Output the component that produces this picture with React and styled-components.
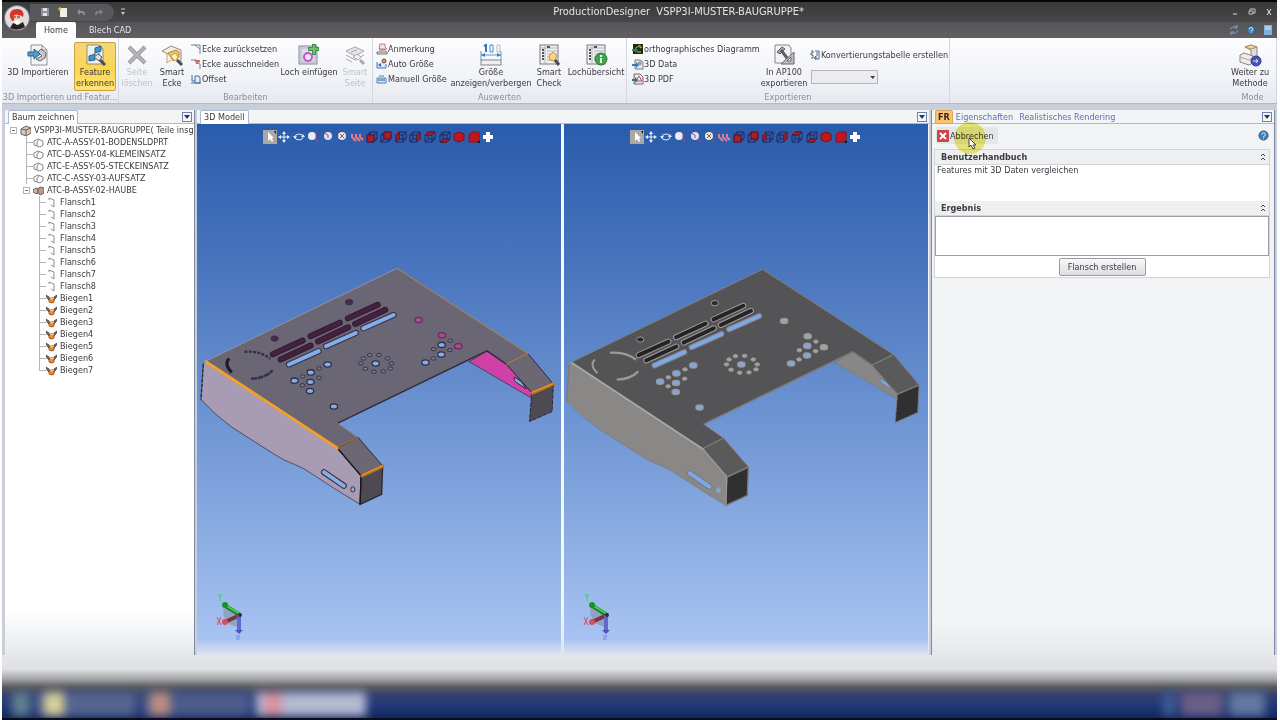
import React from 'react';
import styled, { createGlobalStyle, css } from 'styled-components';

const GlobalStyle = createGlobalStyle`
  * {
    box-sizing: border-box;
  }

  body {
    margin: 0;
    background: #fdfdfd;
    color: #3a3a3e;
    font-family: 'DejaVu Sans Condensed', 'DejaVu Sans', sans-serif;
    font-size: 9px;
    line-height: 12px;
  }

  button, select, textarea {
    margin: 0;
    padding: 0;
    border: 0;
    background: none;
    color: inherit;
    font: inherit;
  }

  svg {
    display: block;
    flex: none;
  }

  ul {
    margin: 0;
    padding: 0;
    list-style: none;
  }
`;

/* ---------- ribbon icons ---------- */

const ImportIcon = () => (
  <svg width="24" height="24" viewBox="0 0 24 24" fill="none">
    <path d="M5 2h11l5 5v15H5z" fill="#f4f5f6" stroke="#909296" />
    <path d="M16 2v5h5" stroke="#909296" />
    <path d="M12 9l3-3 5 4-1 5-5 3-4-2 6-3z" fill="#c9c9cb" stroke="#66686c" />
    <path d="M2 9h6V6l6 5-6 5v-3H2z" fill="#4d9bd0" stroke="#2d5f85" />
  </svg>
);

const FeatureIcon = () => (
  <svg width="24" height="24" viewBox="0 0 24 24" fill="none">
    <path d="M4 2h12l4 4v15H4z" fill="#eef0f0" stroke="#8f8c76" />
    <path d="M12 5l6-2v5l-6 2zM6 13l6-2v6l-6 1z" fill="#3f94d0" stroke="#2b638e" />
    <path d="M12 10l-3 3M16 9v4" stroke="#777" />
    <path d="M11 14l4-3 4 3-3 4z" fill="#dfe3e6" stroke="#5a5d62" />
    <path d="M17 17l5 5" stroke="#4a4c50" strokeWidth="3" />
  </svg>
);

const DeleteIcon = () => (
  <svg width="24" height="24" viewBox="0 0 24 24" fill="none">
    <path d="M4 4l16 16M20 4L4 20" stroke="#97999c" strokeWidth="4" />
    <path d="M4 4l16 16M20 4L4 20" stroke="#b6b7ba" strokeWidth="2" />
  </svg>
);

const CornerIcon = () => (
  <svg width="24" height="24" viewBox="0 0 24 24" fill="none">
    <path d="M2 8l9-5 10 4v12l-5-3v-5l-5-2-3 2z" fill="#f0ede6" stroke="#918b80" />
    <path d="M8 10l8-3 3 2v5l-6 4z" fill="#f1bf52" stroke="#c18d33" />
    <path d="M7 11v9l4-3" stroke="#c8a46a" />
    <path d="M11 13l4-3 3 4-3 4z" fill="#fff3c8" stroke="#cfa24a" />
    <path d="M17 17l5 5" stroke="#4a4c50" strokeWidth="3" />
  </svg>
);

const HoleIcon = () => (
  <svg width="24" height="24" viewBox="0 0 24 24" fill="none">
    <rect x="2" y="3" width="18" height="18" fill="#dcdde6" stroke="#858a9b" />
    <rect x="4" y="5" width="14" height="14" stroke="#b3b7c6" />
    <circle cx="11" cy="14" r="4" fill="#f3e5f7" stroke="#c253d0" strokeWidth="2" />
    <path d="M17 1v11M11 6h11" stroke="#3f8f46" strokeWidth="4" />
    <path d="M17 2v9M12 6h9" stroke="#6fc06b" strokeWidth="2" />
  </svg>
);

const SmartSideIcon = () => (
  <svg width="24" height="24" viewBox="0 0 24 24" fill="none" stroke="#a5a7aa">
    <path d="M3 8l9-4 9 4-9 5z" fill="#e6e7e9" />
    <path d="M3 12l9 5 9-5M3 16l6 3" />
    <path d="M8 9l6-2M10 14l4-3 4 3-3 3z" fill="#f2f2f4" />
    <path d="M17 17l4 4" strokeWidth="3" />
  </svg>
);

const DimensionIcon = () => (
  <svg width="24" height="24" viewBox="0 0 24 24" fill="none">
    <path d="M5 3l2-1v7" stroke="#2f74c4" strokeWidth="2" />
    <path d="M11 2h3v7h-3z" stroke="#4b84c8" />
    <path d="M18 2h3v7h-3z" stroke="#a9bbd2" />
    <path d="M2 8v9M22 8v9M2 12h20" stroke="#6d93bf" />
    <path d="M2 12l4-2v4zM22 12l-4-2v4z" fill="#3f7fc8" />
    <rect x="2" y="17" width="20" height="5" fill="#eff0f3" stroke="#84868b" />
  </svg>
);

const ListSheet = () => (
  <>
    <rect x="3" y="2" width="18" height="19" fill="#f1f1f2" stroke="#77797d" />
    <path d="M8 2v19M3 5h18M10 8h10M10 11h10M10 14h10M10 17h10" stroke="#b0b1b5" />
    <path d="M5 7h2M5 10h2M5 13h2M5 16h2M10 4h3" stroke="#4e5054" strokeWidth="2" />
  </>
);

const CheckIcon = () => (
  <svg width="24" height="24" viewBox="0 0 24 24" fill="none">
    <ListSheet />
    <path d="M12 13l4-4 4 4-3 5-4-1z" fill="#f7d879" stroke="#c39a3e" />
    <path d="M18 17l4 5" stroke="#4a4c50" strokeWidth="3" />
  </svg>
);

const HoleListIcon = () => (
  <svg width="24" height="24" viewBox="0 0 24 24" fill="none">
    <ListSheet />
    <circle cx="17" cy="16" r="6" fill="#3fa548" stroke="#26752e" />
    <path d="M17 12v2M17 15v5" stroke="#f4fff4" strokeWidth="2" />
  </svg>
);

const ExportIcon = () => (
  <svg width="24" height="24" viewBox="0 0 24 24" fill="none">
    <path d="M3 2h14l2 3v15H3z" fill="#f3f3f4" stroke="#85878b" />
    <path d="M5 9l5-5 3 2-5 5z" fill="#a9aaad" stroke="#56585c" />
    <path d="M9 7l9 12" stroke="#5f6165" strokeWidth="3" />
    <path d="M9 21L22 9v12z" fill="#bcbec2" stroke="#66686c" />
    <path d="M15 18l4-4v4z" fill="#f3f3f4" stroke="#66686c" />
  </svg>
);

const MethodIcon = () => (
  <svg width="24" height="24" viewBox="0 0 24 24" fill="none">
    <path d="M7 4l6-2 6 2v10l-6 3V7z" fill="#dcdcde" stroke="#85878b" />
    <path d="M7 4l6 2 6-2-6-2z" fill="#f7d5ab" stroke="#b08d62" />
    <path d="M2 12l4-2 9 3v7l-4 2-9-3z" fill="#ececee" stroke="#85878b" />
    <path d="M2 14l9 3 4-2" stroke="#d3a368" />
    <circle cx="18" cy="18" r="5" fill="#4755b9" stroke="#303b8d" />
    <path d="M15 18h5M18 16l2 2-2 2" stroke="#e3e6fb" />
  </svg>
);

const smallIcons = {
  reset: <path d="M1 2h4l5 4v5M5 2h5v4" stroke="#6c8296" fill="none" />,
  cut: (
    <>
      <path d="M1 2h4l5 4v5" stroke="#6c8296" fill="none" />
      <path d="M5 2l2 4 3-3z" fill="#dc8377" stroke="#b05d57" />
    </>
  ),
  offset: <path d="M2 2v6h3M5 3h4l1 2v5H5zM1 10h10" stroke="#4d6ea1" fill="#e3ebf6" />,
  note: (
    <>
      <path d="M4 1h5v3l2 2H3z" fill="#f9e2e6" stroke="#bd7d87" />
      <path d="M3 7h7M1 9h10v2H1z" fill="#eee" stroke="#707277" />
    </>
  ),
  auto: (
    <>
      <path d="M1 4v6h9V6" fill="#dbeafa" stroke="#4177b5" />
      <circle cx="8" cy="3" r="2" fill="#d9a273" stroke="#6c4a35" />
      <path d="M2 7l3-2v4z" fill="#2868b0" />
    </>
  ),
  manual: (
    <>
      <path d="M1 5v5h9V5zM3 3h5" fill="#cfe3f7" stroke="#4b83bd" />
      <path d="M2 7h7" stroke="#285f9d" />
    </>
  ),
  ortho: (
    <>
      <rect x="1" y="1" width="10" height="10" fill="#1b2c12" />
      <path d="M4 5l4-3v3l2-1M5 9h4" stroke="#a2d345" fill="none" />
      <path d="M0 6h3V4l3 3-3 3V8H0z" fill="#35845d" />
    </>
  ),
  data: (
    <>
      <path d="M3 2h5l3 2v7H3z" fill="#e6e7e9" stroke="#7b7d82" />
      <path d="M5 5l3-2 2 2-2 3z" fill="#9a9ca0" />
      <path d="M0 6h4V4l3 3-3 3V8H0z" fill="#327cb7" />
    </>
  ),
  pdf: (
    <>
      <path d="M2 1h6l3 3v7H2z" fill="#f0e8e8" stroke="#6b6d72" />
      <path d="M4 8l3-5 3 5z" fill="none" stroke="#c8484a" />
      <path d="M0 6h3V4l3 3-3 3V8H0z" fill="#3b6f8f" />
    </>
  ),
  convert: (
    <>
      <path d="M2 2h2v2H2v2h2v3H2M6 2h4v8H6" stroke="#5b6572" fill="none" />
      <path d="M8 3v4M5 9l2-2v3z" fill="#9bbfe2" stroke="#476f9f" />
    </>
  ),
};

const SmallIcon = ({ name }) => (
  <svg width="12" height="12" viewBox="0 0 12 12">{smallIcons[name]}</svg>
);

/* ---------- tree icons ---------- */

const treeIcons = {
  root: (
    <>
      <path d="M1 4l5-3 5 2v5l-5 3-5-2z" fill="#d8c7b8" stroke="#6f625b" />
      <path d="M1 4l5 1 5-2M6 5v6" stroke="#6f625b" fill="none" />
    </>
  ),
  part: (
    <>
      <path d="M1 4l4-2 5 2v4L7 10 4 9 1 8z" fill="#fbfbfc" stroke="#85878c" />
      <path d="M4 9V5l2-2" fill="none" stroke="#85878c" />
    </>
  ),
  sheet: (
    <>
      <path d="M0 5l3-2 2 1v4L4 9 0 7z" fill="#cdb5a5" stroke="#6e5a50" />
      <path d="M5 7V4l2-2 4 1v5l-4 2z" fill="#b79b8c" stroke="#6e5a50" />
    </>
  ),
  flange: (
    <>
      <path d="M3 1l5 2v7L3 7z" fill="#fcfcfc" />
      <path d="M3 3V1l5 2v7l-3-2" fill="none" stroke="#8d8f94" />
    </>
  ),
  bend: (
    <>
      <path d="M3 5h5v4l-2 1-3-1z" fill="#f28a2c" stroke="#a4541c" />
      <path d="M0 2l3 2v3L1 5zM11 2L8 4v3l2-2z" fill="#7d6257" stroke="#665650" />
      <path d="M4 5l2 1 2-1" stroke="#ffe0a0" fill="none" />
    </>
  ),
};

const TreeIcon = ({ name }) => (
  <svg width="11" height="11" viewBox="0 0 11 11">{treeIcons[name]}</svg>
);

/* ---------- view toolbar icons ---------- */

const cube = (face) => (
  <>
    <path d="M2 5h7v7H2zM5 2h7v7M2 5l3-3M9 5l3-3M9 12l3-3M5 2v7h7M5 9l-3 3" fill="none" stroke="#23265c" />
    <path d={face} fill="#a81f2b" stroke="#5e1526" />
  </>
);

const viewTools = [
  ['Auswählen', <><path d="M5 2v9l2-2 2 3 1-1-1-3h2z" fill="#fff" /><path d="M11 1h2v3z" fill="#111" /></>],
  ['Verschieben', <><path d="M7 3v8M3 7h8" stroke="#e8f0fb" /><path d="M7 1l2 3H5zM7 13l2-3H5zM1 7l3-2v4zM13 7l-3-2v4z" fill="#e8f0fb" /></>],
  ['Drehen', <><ellipse cx="7" cy="7" rx="4" ry="3" stroke="#dbe7f6" fill="none" /><path d="M1 6h4l-2 3zM13 7H9l2-3z" fill="#dbe7f6" /></>],
  ['Zoom', <><circle cx="6" cy="6" r="4" fill="#e9edf5" /><path d="M10 3v6l2 3" stroke="#c0485f" fill="none" /></>],
  ['Zoom Bereich', <><circle cx="7" cy="6" r="4" fill="#dde3ee" /><path d="M3 3l4 2v3M9 9l3 3" stroke="#b94863" fill="none" /></>],
  ['Einpassen', <><circle cx="7" cy="6" r="4" fill="#e9e3dc" /><path d="M5 4l4 4M9 4L5 8M9 9l3 3" stroke="#8b5d56" /></>],
  ['Schnitt', <path d="M2 4v3l4 4M6 4v3l4 4M10 4v3l3 3" fill="none" stroke="#e57a8c" strokeWidth="2" />],
  ['Vorne', cube('M2 5h7v7H2z')],
  ['Hinten', cube('M5 2h7v7H5z')],
  ['Links', cube('M2 5l3-3v7l-3 3z')],
  ['Rechts', cube('M9 5l3-3v7l-3 3z')],
  ['Oben', cube('M2 5l3-3h7L9 5z')],
  ['Unten', cube('M2 12l3-3h7l-3 3z')],
  ['Isometrisch', <path d="M7 2l5 2v6l-5 2-5-2V4z" fill="#c0161f" stroke="#7b1019" />],
  ['Schattiert', <><path d="M2 5l3-3h7v8l-2 2H2z" fill="#c0161f" stroke="#8c1019" /><path d="M10 13h3v-3z" fill="#111" /></>],
  ['Hinzufügen', <path d="M7 2v10M2 7h10" stroke="#fff" strokeWidth="4" />],
];

/* ---------- 3D model ---------- */

const palettes = {
  feature: {
    top: '#6b6673', edge: '#2c2936', side: '#a89bb4', inner: '#cf41a6', end: '#4d4a52', flap: '#6d6774',
    fold: '#f1a02c', foldDark: '#b8741f', slot: '#46213f', slotRim: '#2e1c35', open: '#86aee6', hole: '#302e4b', rim: '#97919e',
  },
  solid: {
    top: '#545355', edge: '#7a7876', side: '#8a8887', inner: '#888686', end: '#302f31', flap: '#5b5a5b',
    fold: '#aaa8a5', foldDark: '#7d7b79', slot: '#242326', slotRim: '#a09e9b', open: '#7fa7e3', hole: '#9b9a9a', rim: '#807f7d',
  },
};

const darkSlots = [
  [460, 187, 550, 146], [482, 204, 573, 161],
  [347, 241, 436, 200], [370, 257, 461, 214],
  [234, 295, 324, 254], [257, 311, 348, 269],
];
const openSlots = [[507, 217, 598, 177], [394, 271, 484, 231], [282, 326, 372, 286]];
const bigHoles = [
  [399, 326], [348, 350], [299, 375], [347, 379], [346, 406], [418, 453],
  [544, 323], [743, 267], [742, 296], [694, 320],
];
const smallHoles = [
  [374, 338], [324, 362], [373, 366], [323, 389], [769, 254], [719, 280], [768, 283], [718, 308],
  [526, 298], [554, 297], [580, 308], [592, 323], [588, 338], [567, 347], [539, 348], [513, 339], [499, 323], [507, 308],
];
const markedHoles = [[673, 192], [744, 238], [793, 271]];

const Slot = ({ line, rim, fill }) => (
  <g strokeLinecap="round">
    <path d={`M${line[0]} ${line[1]}L${line[2]} ${line[3]}`} stroke={rim} strokeWidth="18" />
    <path d={`M${line[0]} ${line[1]}L${line[2]} ${line[3]}`} stroke={fill} strokeWidth="12" />
  </g>
);

const Model = ({ variant }) => {
  const c = palettes[variant];
  const marked = variant === 'feature';
  return (
    <ModelSvg viewBox={marked ? '5 23 1098 760' : '9 20 1098 760'} fill="none">
      <path d="M825 318L880 285 938 325 1015 412 1012 426Q915 370 875 346 850 330 825 318z" fill={c.inner} stroke={c.edge} strokeWidth="2" />
      <path d="M962 364q-4 10 8 17l28 19-14-22z" fill={c.open} stroke={c.edge} strokeWidth="3" />
      <path d="M1015 412L1080 385 1076 468 1008 498z" fill={c.end} stroke={c.edge} strokeWidth="3" strokeDasharray="14 3" />
      <path d="M938 325L1003 293 1080 385 1015 412z" fill={c.flap} stroke={c.edge} strokeWidth="3" />
      <path d="M32 316L608 36 1003 293 938 325 880 285 430 503 490 545 428 578z" fill={c.top} stroke={c.rim} strokeWidth="3" />
      <path d="M430 503L880 285 938 325" stroke={c.edge} strokeWidth="4" />
      <path d="M608 36L1003 293" stroke={c.foldDark} strokeWidth="2" />
      <path d="M32 316L428 578 500 662 497 748 430 707 350 655Q330 640 300 628 270 618 235 595L110 515 60 475 17 432 24 325z" fill={c.side} stroke={c.edge} strokeWidth="2" />
      <path d="M24 325L17 432" stroke={c.edge} strokeWidth="4" strokeDasharray="10 5" />
      <path d="M500 662L565 632 562 718 497 748z" fill={c.end} stroke={c.edge} strokeWidth="4" />
      <path d="M428 578L490 545 565 632 500 662z" fill={c.flap} stroke={c.edge} strokeWidth="3" />
      <path d="M428 578L500 662 497 748" stroke={marked ? '#18171d' : '#9c9a98'} strokeWidth="4" />
      <path d="M32 318L428 578" stroke={c.fold} strokeWidth={marked ? 9 : 5} strokeLinecap="round" />
      <path d="M428 576L490 545M938 325L1003 293" stroke={c.foldDark} strokeWidth="3" />
      <path d="M503 662L565 633M1017 412L1080 385" stroke={c.foldDark} strokeWidth={marked ? 10 : 4} strokeLinecap="round" />
      {marked && <path d="M503 660L565 631M1017 410L1080 383" stroke={c.fold} strokeWidth="3" />}
      {darkSlots.map((line) => <Slot key={line.join()} line={line} rim={c.slotRim} fill={c.slot} />)}
      {openSlots.map((line) => <Slot key={line.join()} line={line} rim={marked ? c.hole : c.rim} fill={c.open} />)}
      <Slot line={[388, 651, 448, 692]} rim={c.edge} fill={c.open} />
      <ellipse cx="475" cy="703" rx="6" ry="8" fill={c.open} stroke={c.hole} strokeWidth="3" />
      <path d="M102 308Q85 325 110 350" stroke={marked ? '#1e1b26' : c.hole} strokeWidth={marked ? 9 : 6} />
      <path d="M148 288Q195 284 226 309" stroke={c.hole} strokeWidth="7" strokeDasharray={marked ? '9 4' : '0'} />
      <path d="M168 369Q210 368 233 344" stroke={c.hole} strokeWidth="7" strokeDasharray={marked ? '18 2' : '0'} />
      {[[464, 138], [239, 248]].map(([x, y]) => (
        <ellipse key={x} cx={x} cy={y} rx="11" ry="8" fill={marked ? '#512744' : '#2b2a2c'} stroke={c.hole} strokeWidth="3" />
      ))}
      {bigHoles.map(([x, y]) => (
        <ellipse key={`${x}-${y}`} cx={x} cy={y} rx="11" ry="8" fill={c.open} stroke={c.hole} strokeWidth="4" />
      ))}
      {smallHoles.map(([x, y]) => (
        <ellipse key={`${x}-${y}`} cx={x} cy={y} rx="7" ry="5" fill={marked ? '#7d7a93' : '#a3a2a2'} stroke={c.hole} strokeWidth="3" />
      ))}
      {markedHoles.map(([x, y]) => (
        <ellipse key={x} cx={x} cy={y} rx="11" ry="8" fill={marked ? '#b14a96' : '#a3a2a2'} stroke={marked ? '#6d2a5c' : c.hole} strokeWidth="4" />
      ))}
    </ModelSvg>
  );
};

const Triad = () => (
  <svg width="34" height="50" viewBox="0 0 34 50" fill="none">
    <path d="M8 14q8 2 16 9l-3 12-10-4-4-9z" fill="#8a97ae" opacity=".7" />
    <path d="M24 23L8 13" stroke="#1f7d2a" strokeWidth="4" />
    <path d="M24 22L9 13" stroke="#41d548" strokeWidth="2" />
    <circle cx="9" cy="13" r="3" fill="#1f8f2b" />
    <path d="M24 23L9 30" stroke="#76363f" strokeWidth="4" />
    <circle cx="9" cy="30" r="3" fill="#dc4a5e" />
    <path d="M23 23v16" stroke="#6268cf" strokeWidth="4" />
    <path d="M19 38h8l-4 4z" fill="#4b52c8" />
    <circle cx="24" cy="23" r="2" fill="#2b3145" />
    <path d="M2 2l2 3 2-3M4 5v4" stroke="#3bcf5c" />
    <path d="M1 25l4 8M5 25l-4 8" stroke="#d84a63" />
    <path d="M20 44h4l-4 3h4" stroke="#7f8be0" />
  </svg>
);

/* ---------- parts ---------- */

const BigButton = ({ icon: Icon, lines, width, active, disabled }) => (
  <LargeButton $width={width} $active={active} disabled={disabled}>
    <Icon />
    {lines.map((line) => <span key={line}>{line}</span>)}
  </LargeButton>
);

const CommandList = ({ items, width, inset }) => (
  <Commands $width={width} $inset={inset}>
    {items.map(([icon, label]) => (
      <SmallButton key={label}>
        <SmallIcon name={icon} />
        {label}
      </SmallButton>
    ))}
  </Commands>
);

const MenuButton = ({ label }) => (
  <DropButton aria-label={label}>
    <svg width="6" height="4" viewBox="0 0 6 4"><path d="M0 0h6L3 4z" fill="#35363d" /></svg>
  </DropButton>
);

const Collapse = () => (
  <svg width="6" height="8" viewBox="0 0 6 8" fill="none" stroke="#44454a">
    <path d="M1 3l2-2 2 2M1 7l2-2 2 2" />
  </svg>
);

const HelpIcon = ({ size }) => (
  <svg width={size} height={size} viewBox="0 0 12 12" fill="none">
    <circle cx="6" cy="6" r="5" fill="#3f7fb5" stroke="#2a5679" />
    <path d="M4 5q0-2 2-2t2 2-2 2v1M6 9v1" stroke="#e8f2fb" />
  </svg>
);

const tree = [
  { depth: 0, icon: 'root', label: 'VSPP3I-MUSTER-BAUGRUPPE( Teile insg', open: true },
  { depth: 1, icon: 'part', label: 'ATC-A-ASSY-01-BODENSLDPRT' },
  { depth: 1, icon: 'part', label: 'ATC-D-ASSY-04-KLEMEINSATZ' },
  { depth: 1, icon: 'part', label: 'ATC-E-ASSY-05-STECKEINSATZ' },
  { depth: 1, icon: 'part', label: 'ATC-C-ASSY-03-AUFSATZ' },
  { depth: 1, icon: 'sheet', label: 'ATC-B-ASSY-02-HAUBE', open: true },
  ...[1, 2, 3, 4, 5, 6, 7, 8].map((n) => ({ depth: 2, icon: 'flange', label: `Flansch${n}` })),
  ...[1, 2, 3, 4, 5, 6, 7].map((n) => ({ depth: 2, icon: 'bend', label: `Biegen${n}`, last: n === 7 })),
];

const View = ({ variant }) => (
  <Viewport>
    <ViewTools>
      {viewTools.map(([label, drawing], i) => (
        <ViewTool key={label} aria-label={label} $active={i === 0}>
          <svg width="14" height="14" viewBox="0 0 14 14">{drawing}</svg>
        </ViewTool>
      ))}
    </ViewTools>
    <Model variant={variant} />
    <TriadCorner><Triad /></TriadCorner>
  </Viewport>
);

const App = () => (
  <Window>
    <GlobalStyle />
    <TitleBar>
      <QuickAccess>
        <IconButton aria-label="Speichern">
          <svg width="10" height="10" viewBox="0 0 10 10"><path d="M1 1h8v8H1z" fill="#8c93a0" /><path d="M3 1h4v3H3zM3 6h4v3H3z" fill="#dfe2e8" /></svg>
        </IconButton>
        <IconButton aria-label="Neu">
          <svg width="10" height="10" viewBox="0 0 10 10"><path d="M2 1h7v9H2z" fill="#f1efe4" /><path d="M0 2h4M2 0v4" stroke="#f2cf4c" /></svg>
        </IconButton>
        <IconButton aria-label="Rückgängig">
          <svg width="10" height="10" viewBox="0 0 10 10" fill="none"><path d="M3 5h3q2 0 2 3" stroke="#8e8f94" strokeWidth="2" /><path d="M4 2L1 5l3 3z" fill="#8e8f94" /></svg>
        </IconButton>
        <IconButton aria-label="Wiederholen">
          <svg width="10" height="10" viewBox="0 0 10 10" fill="none"><path d="M7 5H4Q2 5 2 8" stroke="#7f8085" strokeWidth="2" /><path d="M6 2l3 3-3 3z" fill="#7f8085" /></svg>
        </IconButton>
      </QuickAccess>
      <IconButton aria-label="Schnellzugriff anpassen">
        <svg width="6" height="8" viewBox="0 0 6 8"><path d="M1 1h4" stroke="#c9c9cc" /><path d="M1 4h4L3 7z" fill="#c9c9cc" /></svg>
      </IconButton>
      <Title>ProductionDesigner&nbsp; VSPP3I-MUSTER-BAUGRUPPE*</Title>
      <WindowButtons>
        <IconButton aria-label="Minimieren"><svg width="8" height="8" viewBox="0 0 8 8"><path d="M2 6h4" stroke="#d5d5d8" strokeWidth="1" /></svg></IconButton>
        <IconButton aria-label="Wiederherstellen"><svg width="8" height="8" viewBox="0 0 8 8" fill="none" stroke="#c5c5c8"><path d="M1 3h4v3H1zM2 3V1h5v4H5" /></svg></IconButton>
        <IconButton aria-label="Schließen"><svg width="8" height="8" viewBox="0 0 8 8"><path d="M2 1l4 6M6 1L2 7" stroke="#e8e8ea" strokeWidth="1" /></svg></IconButton>
      </WindowButtons>
      <Orb aria-label="Anwendungsmenü">
        <svg width="28" height="28" viewBox="0 0 28 28">
          <circle cx="14" cy="14" r="13" fill="#77787c" />
          <circle cx="14" cy="14" r="12" fill="#dddddf" />
          <path d="M7 13q-1-8 7-8t6 8l-3-2-1 4-7 2z" fill="#d9322b" />
          <path d="M10 12q4-3 7 0l-1 5-4 1z" fill="#f0c6b0" />
          <path d="M10 13h3M14 13h3" stroke="#5b2520" />
          <path d="M7 24l3-5 5 2 5-3 2 5q-8 5-15 1z" fill="#27201f" />
          <path d="M11 18l3 3 3-3-1-2h-4z" fill="#fff" />
        </svg>
      </Orb>
    </TitleBar>

    <RibbonTabs>
      <RibbonTab $active>Home</RibbonTab>
      <RibbonTab>Blech CAD</RibbonTab>
      <RibbonTools>
        <IconButton aria-label="Aktualisieren"><svg width="10" height="10" viewBox="0 0 10 10" fill="none" stroke="#72a5d8"><path d="M1 4q4-4 7-2M8 0v3H5M9 6q-4 4-7 2M2 10V7h3" /></svg></IconButton>
        <IconButton aria-label="Hilfe"><HelpIcon size={10} /></IconButton>
        <IconButton aria-label="Info"><svg width="10" height="10" viewBox="0 0 10 10"><path d="M1 0h8v10H1z" fill="#7eb2e0" /><path d="M2 2h6M2 4h6" stroke="#d5e8f8" /></svg></IconButton>
      </RibbonTools>
    </RibbonTabs>

    <Ribbon>
      <Group $width={117}>
        <GroupBody>
          <BigButton icon={ImportIcon} lines={['3D Importieren']} width={72} />
          <BigButton icon={FeatureIcon} lines={['Feature', 'erkennen']} width={42} active />
        </GroupBody>
        <Caption>3D Importieren und Featur...</Caption>
      </Group>
      <Group $width={254}>
        <GroupBody>
          <BigButton icon={DeleteIcon} lines={['Seite', 'löschen']} width={36} disabled />
          <BigButton icon={CornerIcon} lines={['Smart', 'Ecke']} width={34} />
          <CommandList width={91} inset={1} items={[['reset', 'Ecke zurücksetzen'], ['cut', 'Ecke ausschneiden'], ['offset', 'Offset']]} />
          <BigButton icon={HoleIcon} lines={['Loch einfügen']} width={58} />
          <BigButton icon={SmartSideIcon} lines={['Smart', 'Seite']} width={34} disabled />
        </GroupBody>
        <Caption>Bearbeiten</Caption>
      </Group>
      <Group $width={254}>
        <GroupBody>
          <CommandList width={78} inset={3} items={[['note', 'Anmerkung'], ['auto', 'Auto Größe'], ['manual', 'Manuell Größe']]} />
          <BigButton icon={DimensionIcon} lines={['Größe', 'anzeigen/verbergen']} width={80} />
          <BigButton icon={CheckIcon} lines={['Smart', 'Check']} width={36} />
          <BigButton icon={HoleListIcon} lines={['Lochübersicht']} width={58} />
        </GroupBody>
        <Caption>Auswerten</Caption>
      </Group>
      <Group $width={323}>
        <GroupBody>
          <CommandList width={132} inset={5} items={[['ortho', 'orthographisches Diagramm'], ['data', '3D Data'], ['pdf', '3D PDF']]} />
          <BigButton icon={ExportIcon} lines={['In AP100', 'exportieren']} width={50} />
          <ConvertBox>
            <SmallButton><SmallIcon name="convert" />Konvertierungstabelle erstellen</SmallButton>
            <SelectWrap>
              <select aria-label="Konvertierungstabelle" />
              <svg width="5" height="3" viewBox="0 0 5 3"><path d="M0 0h5L3 3z" fill="#3e3f44" /></svg>
            </SelectWrap>
          </ConvertBox>
        </GroupBody>
        <Caption>Exportieren</Caption>
      </Group>
      <Spacer />
      <Group $width={48}>
        <GroupBody>
          <BigButton icon={MethodIcon} lines={['Weiter zu', 'Methode']} width={42} />
        </GroupBody>
        <Caption>Mode</Caption>
      </Group>
    </Ribbon>

    <Workspace>
      <TreePanel>
        <PanelTabs>
          <PanelTab $active>Baum zeichnen</PanelTab>
          <MenuButton label="Baum Menü" />
        </PanelTabs>
        <Tree>
          {tree.map((node) => (
            <TreeRow key={node.label} $depth={node.depth}>
              <Lead $box={node.open} $last={node.last} />
              <TreeIcon name={node.icon} />
              <span>{node.label}</span>
            </TreeRow>
          ))}
        </Tree>
      </TreePanel>

      <ModelPanel>
        <PanelTabs>
          <PanelTab $active>3D Modell</PanelTab>
          <MenuButton label="Modell Menü" />
        </PanelTabs>
        <Views>
          <View variant="feature" />
          <View variant="solid" />
        </Views>
      </ModelPanel>

      <SidePanel>
        <PanelTabs>
          <SideTab $active>FR</SideTab>
          <SideTab>Eigenschaften</SideTab>
          <SideTab>Realistisches Rendering</SideTab>
          <MenuButton label="Eigenschaften Menü" />
        </PanelTabs>
        <Actions>
          <CancelButton>
            <svg width="12" height="12" viewBox="0 0 12 12">
              <rect width="12" height="12" rx="1" fill="#cf4347" />
              <path d="M3 3l6 6M9 3L3 9" stroke="#fff" strokeWidth="2" />
            </svg>
            Abbrechen
            <Halo />
            <Pointer width="9" height="13" viewBox="0 0 9 13">
              <path d="M1 1v9l2-2 2 4 2-1-2-3h3z" fill="#fff" stroke="#45443a" />
            </Pointer>
          </CancelButton>
          <IconButton aria-label="Hilfe"><HelpIcon size={11} /></IconButton>
        </Actions>
        <Section>
          <SectionHead><h2>Benutzerhandbuch</h2><Collapse /></SectionHead>
          <Hint>Features mit 3D Daten vergleichen</Hint>
          <SectionHead><h2 id="result">Ergebnis</h2><Collapse /></SectionHead>
          <Result aria-labelledby="result" />
          <ButtonRow><CreateButton>Flansch erstellen</CreateButton></ButtonRow>
        </Section>
      </SidePanel>
    </Workspace>

    <Footer>
      <Taskbar>
        <TaskIcon $width={18} $color="#5f8090" />
        <TaskButton $width={100} $color="#56658f"><TaskIcon $width={20} $color="#d8cf9a" /></TaskButton>
        <TaskButton $width={108} $color="#4c5c8b"><TaskIcon $width={20} $color="#bb8e81" /></TaskButton>
        <TaskButton $width={110} $color="#b4bad2"><TaskIcon $width={18} $color="#d793a0" /></TaskButton>
        <Spacer />
        <TaskIcon $width={12} $color="#405d95" />
        <TaskIcon $width={42} $color="#6a5f88" />
        <TaskIcon $width={36} $color="#6478a0" />
      </Taskbar>
    </Footer>
  </Window>
);

export default App;

const Window = styled.div`
  display: flex;
  flex-direction: column;
  min-height: 100vh;
  margin: 0 3px 0 2px;
  background: #c9ced9;
`;

const TitleBar = styled.header`
  position: relative;
  display: flex;
  align-items: center;
  height: 22px;
  padding-left: 28px;
  border-top: 2px solid #050505;
  background: linear-gradient(#39393b, #474649);
`;

const QuickAccess = styled.div`
  display: flex;
  align-items: center;
  gap: 8px;
  height: 17px;
  padding: 0 10px;
  margin-right: 6px;
  border-radius: 0 9px 9px 0;
  background: #58575a;
`;

const IconButton = styled.button`
  display: grid;
  place-items: center;
`;

const Title = styled.h1`
  flex: 1;
  margin: 0;
  color: #e4e4e6;
  font-size: 11px;
  font-weight: 400;
  line-height: 14px;
  text-align: center;
`;

const WindowButtons = styled.div`
  display: flex;
  gap: 9px;
  padding-right: 4px;
`;

const Orb = styled.button`
  position: absolute;
  top: 2px;
  left: 1px;
  z-index: 1;
`;

const RibbonTabs = styled.nav`
  display: flex;
  gap: 3px;
  height: 16px;
  padding-left: 34px;
  background: linear-gradient(#555457, #615f62);
`;

const RibbonTab = styled.button`
  height: 16px;
  padding: 0 ${(props) => (props.$active ? 8 : 10)}px;
  border-radius: 2px 2px 0 0;
  background: ${(props) => (props.$active ? '#fdfdfd' : 'none')};
  color: ${(props) => (props.$active ? '#3a3a3e' : '#e4e4e6')};
`;

const RibbonTools = styled.div`
  display: flex;
  align-items: center;
  gap: 7px;
  margin-left: auto;
  padding-right: 4px;
`;

const Ribbon = styled.div`
  display: flex;
  height: 66px;
  border-bottom: 1px solid #b5bac5;
  background: linear-gradient(#fdfdfe, #f1f3f8 60%, #e6e9f0);
`;

const Group = styled.section`
  display: flex;
  flex: none;
  flex-direction: column;
  width: ${(props) => props.$width}px;
  padding-top: 4px;
  border-right: 1px solid #d4d7df;
`;

const GroupBody = styled.div`
  display: flex;
  height: 49px;
`;

const Caption = styled.div`
  color: #8a8e98;
  text-align: center;
  white-space: nowrap;
`;

const Spacer = styled.div`
  flex: 1;
`;

const LargeButton = styled.button`
  display: flex;
  flex: none;
  flex-direction: column;
  align-items: center;
  width: ${(props) => props.$width}px;
  height: 49px;
  border: 1px solid transparent;
  border-radius: 2px;
  line-height: 11px;
  white-space: nowrap;

  &:disabled {
    color: #c0c2c7;
  }

  ${(props) => props.$active && css`
    border-color: #c9a340;
    background: linear-gradient(#f6d57b, #fbd550 55%, #fde476);
  `}
`;

const Commands = styled.div`
  display: flex;
  flex: none;
  flex-direction: column;
  gap: 3px;
  width: ${(props) => props.$width}px;
  padding: 1px 0 0 ${(props) => props.$inset}px;
`;

const SmallButton = styled.button`
  display: flex;
  align-items: center;
  white-space: nowrap;
`;

const ConvertBox = styled.div`
  display: flex;
  flex-direction: column;
  gap: 9px;
  padding-top: 7px;
`;

const SelectWrap = styled.div`
  position: relative;
  width: 67px;
  margin-left: 2px;

  select {
    display: block;
    width: 100%;
    height: 14px;
    border: 1px solid #b4b6bb;
    background: #ececee;
    appearance: none;
  }

  svg {
    position: absolute;
    top: 6px;
    right: 3px;
    pointer-events: none;
  }
`;

const Workspace = styled.main`
  display: flex;
  flex: 1;
  gap: 2px;
  padding: 6px 2px 0 3px;
`;

const TreePanel = styled.aside`
  display: flex;
  flex: none;
  flex-direction: column;
  width: 190px;
  border-right: 1px solid #7d8aa3;
  background: linear-gradient(#fff 92%, #e6e8ec);
`;

const ModelPanel = styled.section`
  display: flex;
  flex: 1;
  flex-direction: column;
  min-width: 0;
`;

const SidePanel = styled.aside`
  display: flex;
  flex: none;
  flex-direction: column;
  width: 344px;
  border: solid #7d8aa3;
  border-width: 0 1px;
  background: linear-gradient(#f2f3f5 94%, #e6e8ec);
`;

const PanelTabs = styled.div`
  display: flex;
  align-items: center;
  flex: none;
  height: 14px;
  padding: 0 2px 0 3px;
  border-bottom: 1px solid #a9bad5;
  background: #f2f4f6;

  > :last-child {
    margin-left: auto;
  }
`;

const PanelTab = styled.button`
  height: 14px;
  padding: 0 3px;
  border: 1px solid #a9bad5;
  border-bottom: 0;
  border-radius: 2px 2px 0 0;
  background: #fff;
`;

const SideTab = styled.button`
  height: 14px;
  padding: 0 3px;
  color: #5c73ad;

  ${(props) => props.$active && css`
    padding: 0 2px;
    border: 1px solid #dda758;
    border-radius: 2px 2px 0 0;
    background: #fbc26b;
    color: #33291c;
    font-weight: 700;
  `}
`;

const DropButton = styled.button`
  display: grid;
  place-items: center;
  width: 10px;
  height: 10px;
  border: 1px solid #6d83ad;
  background: #f4f7fb;
`;

const Tree = styled.ul`
  overflow: hidden;
`;

const TreeRow = styled.li`
  display: flex;
  align-items: center;
  height: 12px;
  padding-left: ${(props) => 5 + props.$depth * 13}px;
  white-space: nowrap;

  span + svg {
    margin-right: 3px;
  }
`;

const Lead = styled.span`
  flex: none;
  width: 10px;
  height: 12px;
  background:
    linear-gradient(#b4b5b8, #b4b5b8) 3px 0 / 1px ${(props) => (props.$last ? '6px' : '12px')} no-repeat,
    linear-gradient(#b4b5b8, #b4b5b8) 3px 6px / 7px 1px no-repeat;

  ${(props) => props.$box && css`
    width: 7px;
    height: 7px;
    margin-right: 3px;
    border: 1px solid #b4b5b8;
    background: linear-gradient(#6d6e72, #6d6e72) center / 3px 1px no-repeat #fff;
  `}
`;

const Views = styled.div`
  display: flex;
  flex: 1;
  gap: 3px;
  padding-right: 1px;
  background: linear-gradient(#f4f7fb 90%, #e0e4ee);
`;

const Viewport = styled.div`
  display: grid;
  flex: 1;
  grid-template-rows: 1fr auto 1fr;
  min-width: 0;
  background: linear-gradient(#2a5cac, #4874bd 26%, #86a9e0 74%, #a8c3f2 97%, #e0e4ee);
`;

const ViewTools = styled.div`
  display: flex;
  align-items: start;
  justify-content: space-between;
  justify-self: center;
  width: 233px;
  padding-top: 6px;
`;

const ViewTool = styled.button`
  background: ${(props) => (props.$active ? '#a9a8a6' : 'none')};
`;

const ModelSvg = styled.svg`
  width: 100%;
  height: auto;
`;

const TriadCorner = styled.div`
  align-self: end;
  padding: 0 0 13px 19px;
`;

const Actions = styled.div`
  display: flex;
  align-items: center;
  justify-content: space-between;
  height: 25px;
  padding: 0 5px 2px 4px;
`;

const CancelButton = styled.button`
  position: relative;
  display: flex;
  align-items: center;
  gap: 1px;
  height: 17px;
  padding: 0 4px 0 1px;
  background: #e5e6e8;
`;

const Halo = styled.span`
  position: absolute;
  top: -5px;
  left: 18px;
  width: 32px;
  height: 32px;
  border-radius: 50%;
  background: #ebe64e;
  mix-blend-mode: multiply;
  opacity: 0.75;
`;

const Pointer = styled.svg`
  position: absolute;
  top: 10px;
  left: 32px;
`;

const Section = styled.section`
  margin: 0 4px 0 2px;
  border: 1px solid #d2d4da;
  background: #fff;
`;

const SectionHead = styled.div`
  display: flex;
  align-items: center;
  justify-content: space-between;
  height: 15px;
  padding: 0 3px 0 6px;
  border-bottom: 1px solid #d2d4da;
  background: #eeeff1;

  h2 {
    margin: 0;
    font-size: 9px;
  }
`;

const Hint = styled.p`
  height: 36px;
  margin: 0;
  padding-left: 2px;
  line-height: 10px;
`;

const Result = styled.textarea`
  display: block;
  width: 100%;
  height: 40px;
  border: 1px solid #9b9da2;
  background: #fff;
  resize: none;
`;

const ButtonRow = styled.div`
  display: flex;
  justify-content: center;
  padding: 2px 0 1px;
`;

const CreateButton = styled.button`
  width: 87px;
  height: 18px;
  border: 1px solid #9a9ba0;
  border-radius: 2px;
  background: linear-gradient(#f8f8f9, #dddee2);
`;

const Footer = styled.footer`
  display: flex;
  flex-direction: column;
  justify-content: flex-end;
  height: 65px;
  overflow: hidden;
  border-bottom: 2px solid #070b1c;
  background: linear-gradient(#e4e6eb, #e0e1e5 14px, #a5a5a7 24px, #595a60 32px, #34406c 40px, #20387a 50px, #12265a);
`;

const Taskbar = styled.div`
  display: flex;
  gap: 6px;
  height: 29px;
  padding: 3px 12px 2px 10px;
  filter: blur(5px);
`;

const TaskIcon = styled.span`
  width: ${(props) => props.$width}px;
  height: 24px;
  background: ${(props) => props.$color};
`;

const TaskButton = styled.div`
  width: ${(props) => props.$width}px;
  height: 24px;
  padding-left: 8px;
  background: ${(props) => props.$color};

  span {
    display: block;
  }
`;
